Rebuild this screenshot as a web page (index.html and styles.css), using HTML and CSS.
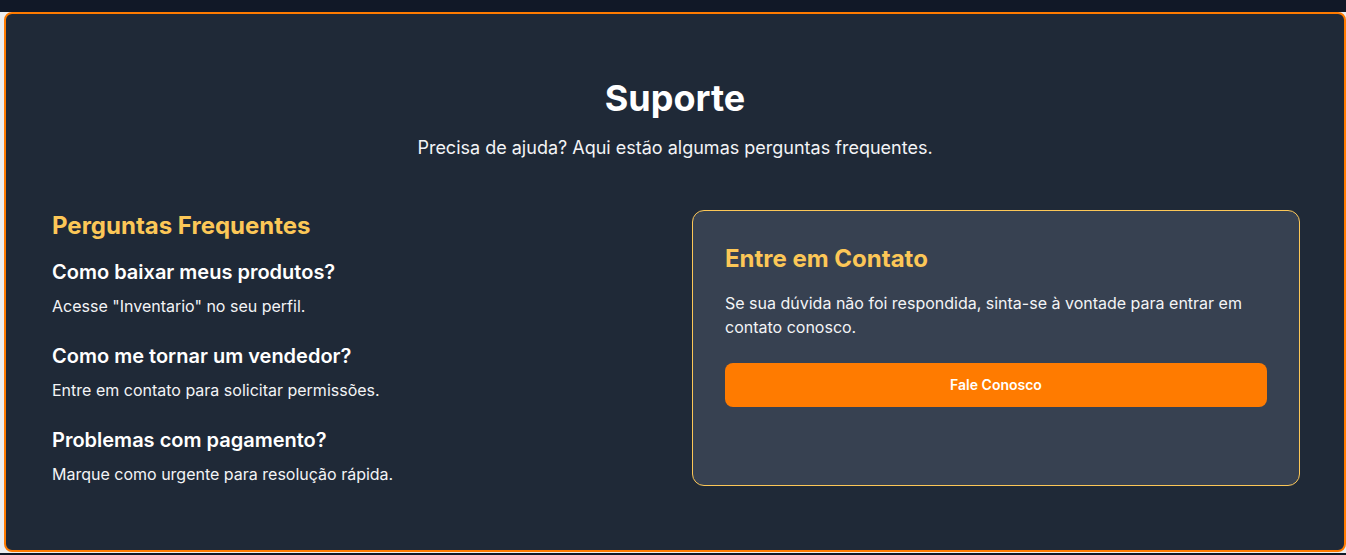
FILE: index.html
```html
<!DOCTYPE html>
<html lang="pt-BR">
<head>
<meta charset="utf-8">
<title>Suporte</title>
<link rel="stylesheet" href="styles.css">
</head>
<body>
<div class="frame">
  <section class="support">
    <header class="intro">
      <h1 class="title">Suporte</h1>
      <p class="subtitle">Precisa de ajuda? Aqui estão algumas perguntas frequentes.</p>
    </header>
    <div class="grid">
      <div class="faq">
        <h2 class="section-title">Perguntas Frequentes</h2>
        <div class="faq-list">
          <div class="faq-item">
            <h3 class="question">Como baixar meus produtos?</h3>
            <p class="answer">Acesse "Inventario" no seu perfil.</p>
          </div>
          <div class="faq-item">
            <h3 class="question">Como me tornar um vendedor?</h3>
            <p class="answer">Entre em contato para solicitar permissões.</p>
          </div>
          <div class="faq-item">
            <h3 class="question">Problemas com pagamento?</h3>
            <p class="answer">Marque como urgente para resolução rápida.</p>
          </div>
        </div>
      </div>
      <div class="contact">
        <h2 class="section-title contact-title">Entre em Contato</h2>
        <p class="contact-text">Se sua dúvida não foi respondida, sinta-se à vontade para entrar em contato conosco.</p>
        <button class="btn" type="button">Fale Conosco</button>
      </div>
    </div>
  </section>
</div>
</body>
</html>
```

FILE: styles.css
```css
* { box-sizing: border-box; }
html, body { margin: 0; padding: 0; }
body {
  background: #111827;
  font-family: Inter, "Noto Sans", sans-serif;
  color: #ffffff;
  overflow: hidden;
}
.frame {
  margin-top: 12px;
  background: #eceef1;
  padding-left: 4px;
  padding-bottom: 1px;
}
.support {
  background: #1f2937;
  border: 2px solid #ff7b00;
  border-radius: 8px;
  padding: 64px 46px;
}
.intro { text-align: center; margin-bottom: 48px; }
.title {
  margin: 0 0 16px;
  font-size: 36px;
  line-height: 40px;
  font-weight: 700;
}
.subtitle {
  margin: 0;
  font-size: 18px;
  line-height: 28px;
  color: #f3f4f6;
}
.grid {
  display: grid;
  grid-template-columns: 608px 608px;
  gap: 32px;
}
.section-title {
  margin: 0 0 16px;
  font-size: 24px;
  line-height: 32px;
  font-weight: 700;
  color: #fcc757;
}
.faq-list { display: flex; flex-direction: column; gap: 24px; }
.question {
  margin: 0;
  font-size: 20px;
  line-height: 28px;
  font-weight: 600;
}
.answer {
  margin: 8px 0 0;
  font-size: 16px;
  line-height: 24px;
  color: #f3f4f6;
}
.contact {
  background: #374151;
  border: 1px solid #fcc757;
  border-radius: 12px;
  padding: 32px;
}
.contact-text {
  margin: 0 0 24px;
  font-size: 16px;
  line-height: 24px;
  color: #f3f4f6;
}
.btn {
  display: block;
  width: 100%;
  height: 44px;
  border: 0;
  border-radius: 8px;
  background: #ff7b00;
  color: #ffffff;
  font-family: Inter, "Noto Sans", sans-serif;
  font-size: 14px;
  font-weight: 600;
  line-height: 20px;
  cursor: pointer;
}
```
